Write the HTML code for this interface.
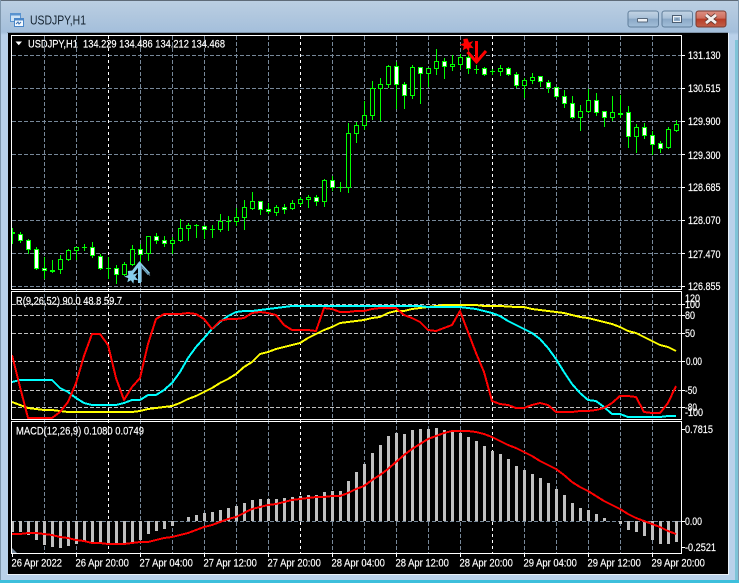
<!DOCTYPE html>
<html>
<head>
<meta charset="utf-8">
<title>USDJPY,H1</title>
<style>
html,body{margin:0;padding:0;background:#b9d1ea;width:739px;height:583px;overflow:hidden}
svg{position:absolute;left:0;top:0;display:block}
text{font-family:"Liberation Sans",sans-serif;font-size:11px;fill:#fff;stroke:#fff;stroke-width:.18px}
.t{font-size:13px;fill:#14222f;stroke:none}
</style>
</head>
<body>
<svg width="739" height="583" viewBox="0 0 739 583" xmlns="http://www.w3.org/2000/svg">
<defs>
<linearGradient id="win" x1="0" y1="0" x2="0" y2="1"><stop offset="0" stop-color="#bccfe2"/><stop offset="0.055" stop-color="#a4bfdb"/><stop offset="0.06" stop-color="#b9d1ea"/><stop offset="1" stop-color="#b9d1ea"/></linearGradient>
<linearGradient id="btn" x1="0" y1="0" x2="0" y2="1"><stop offset="0" stop-color="#c4d4e4"/><stop offset="0.45" stop-color="#a8c0d8"/><stop offset="0.5" stop-color="#8aa8c6"/><stop offset="1" stop-color="#a3c0da"/></linearGradient>
<linearGradient id="cls" x1="0" y1="0" x2="0" y2="1"><stop offset="0" stop-color="#dc9083"/><stop offset="0.45" stop-color="#cf6f5e"/><stop offset="0.5" stop-color="#b83c26"/><stop offset="1" stop-color="#c0604a"/></linearGradient>
<clipPath id="c1"><rect x="12" y="36" width="669" height="253"/></clipPath>
<clipPath id="c2"><rect x="12" y="292" width="669" height="127"/></clipPath>
<clipPath id="c3"><rect x="12" y="422" width="669" height="131"/></clipPath>
</defs>

<!-- window -->
<rect width="739" height="583" fill="url(#win)"/>
<rect x="0" y="0" width="739" height="1" fill="#5f6b78"/>
<rect x="0" y="0" width="1" height="583" fill="#7f97ad"/>
<rect x="738" y="0" width="1" height="583" fill="#7f97ad"/>
<rect x="735" y="40" width="3" height="540" fill="#7fc4d8"/>
<rect x="0" y="580" width="739" height="3" fill="#3dbfdc"/>
<rect x="8" y="33" width="720" height="541" fill="#000"/>
<rect x="7" y="32" width="721" height="1" fill="#7f93a8"/>
<rect x="728" y="33" width="1" height="541" fill="#eaf1f8"/>
<rect x="7" y="574" width="722" height="1" fill="#eaf1f8"/>

<!-- title icon -->
<g shape-rendering="crispEdges">
<rect x="10.5" y="13.5" width="10" height="8" fill="#cfe3f5" stroke="#5a93cf"/>
<rect x="10.5" y="13.5" width="10" height="2" fill="#5a93cf"/>
<rect x="14.5" y="18.5" width="9" height="8" fill="#f4f9fe" stroke="#4a86c8"/>
<rect x="14.5" y="18.5" width="9" height="2" fill="#4a86c8"/>
</g>
<path d="M16 24l2-2 1 2 2-2" fill="none" stroke="#3a70b0"/>
<text class="t" x="30" y="24.5" textLength="56" lengthAdjust="spacingAndGlyphs">USDJPY,H1</text>

<!-- caption buttons -->
<rect x="628" y="11" width="30.5" height="16" rx="2.5" fill="url(#btn)" stroke="#5f7d9a"/>
<rect x="662" y="11" width="30.5" height="16" rx="2.5" fill="url(#btn)" stroke="#5f7d9a"/>
<rect x="696" y="11" width="30" height="16" rx="2.5" fill="url(#cls)" stroke="#7a3a30"/>
<rect x="637.5" y="18.5" width="10" height="3.5" fill="#eef2f6" stroke="#56677a" rx="0.5"/>
<rect x="672.5" y="15.5" width="9" height="7" fill="none" stroke="#4c5e72" stroke-width="1"/>
<rect x="673.5" y="16.5" width="7" height="5" fill="none" stroke="#eef2f6" stroke-width="1"/>
<rect x="675.5" y="18" width="3" height="2" fill="#7d97b0"/>
<path d="M706 15l10 8M716 15l-10 8" stroke="#5a3530" stroke-width="4.4" fill="none"/>
<path d="M706 15l10 8M716 15l-10 8" stroke="#f4f0ee" stroke-width="2.8" fill="none"/>

<!-- grid -->
<g shape-rendering="crispEdges" fill="none">
<path stroke="#778899" stroke-dasharray="4 2" d="M12 55.5H681M12 88.5H681M12 121.5H681M12 154.5H681M12 187.5H681M12 220.5H681M12 253.5H681M12 286.5H681M12 521.5H681"/>
<path stroke="#c0c0c0" stroke-dasharray="4 2" d="M12 304.5H681M12 315.5H681M12 333.5H681M12 361.5H681M12 390.5H681M12 407.5H681"/>
<path stroke="#778899" stroke-dasharray="4 2" d="M44.5 36V553M76.5 36V553M140.5 36V553M172.5 36V553M204.5 36V553M236.5 36V553M268.5 36V553M332.5 36V553M364.5 36V553M396.5 36V553M428.5 36V553M460.5 36V553M524.5 36V553M556.5 36V553M588.5 36V553M620.5 36V553M652.5 36V553"/>
<path stroke="#fff" stroke-dasharray="3 3" d="M108.5 36V553M300.5 36V553M492.5 36V553"/>
</g>

<!-- candles -->
<g clip-path="url(#c1)" shape-rendering="crispEdges" stroke="#00ff00" fill="none">
<path d="M12.5 228V244M20.5 232V243M28.5 239V254M36.5 247V270M44.5 257V279M52.5 260V273M60.5 255V274M68.5 249V261M76.5 247V260M84.5 244V251M92.5 242V258M100.5 254V270M108.5 257V279M116.5 265V284M124.5 262V276M132.5 245V266M140.5 244V264M148.5 236V261M156.5 233V244M164.5 236V247M172.5 237V254M180.5 219V242M188.5 223V241M196.5 224V238M204.5 225V239M212.5 225V238M220.5 214V232M228.5 216V231M236.5 208V226M244.5 200V230M252.5 192V210M260.5 201V215M268.5 203V214M276.5 205V216M284.5 204V214M292.5 200V210M300.5 197V206M308.5 195V208M316.5 195V206M324.5 179V207M332.5 176V191M340.5 182V192M348.5 123V193M356.5 122V143M364.5 101V130M372.5 81V120M380.5 78V121M388.5 65V88M396.5 62V109M404.5 82V109M412.5 65V99M420.5 67V104M428.5 68V87M436.5 49V75M444.5 58V79M452.5 55V71M460.5 54V69M468.5 54V74M476.5 65V74M484.5 67V76M492.5 69V75M500.5 65V76M508.5 67V76M516.5 72V88M524.5 78V98M532.5 73V84M540.5 76V87M548.5 80V93M556.5 87V98M564.5 90V108M572.5 96V119M580.5 105V131M588.5 89V113M596.5 93V116M604.5 111V127M612.5 96V121M620.5 95V118M628.5 106V148M636.5 124V153M644.5 123V139M652.5 131V155M660.5 141V153M668.5 127V149M676.5 120V132"/>
<path d="M10 232.5h5M10 233.5h5M50 270.5h5M50 271.5h5M82 247.5h5M106 268.5h5M194 225.5h5M210 229.5h5M226 221.5h5M338 187.5h5M474 69.5h5M490 71.5h5M618 113.5h5M618 114.5h5"/>
<path fill="#000" d="M58.5 259.5h4V269.5h-4zM66.5 250.5h4V259.5h-4zM74.5 247.5h4V250.5h-4zM122.5 264.5h4V274.5h-4zM130.5 249.5h4V264.5h-4zM146.5 236.5h4V253.5h-4zM170.5 240.5h4V243.5h-4zM178.5 228.5h4V240.5h-4zM186.5 225.5h4V228.5h-4zM218.5 221.5h4V229.5h-4zM234.5 217.5h4V221.5h-4zM242.5 207.5h4V217.5h-4zM250.5 201.5h4V208.5h-4zM274.5 207.5h4V212.5h-4zM290.5 203.5h4V208.5h-4zM298.5 199.5h4V203.5h-4zM306.5 197.5h4V199.5h-4zM322.5 180.5h4V201.5h-4zM346.5 133.5h4V187.5h-4zM354.5 125.5h4V133.5h-4zM362.5 115.5h4V125.5h-4zM370.5 88.5h4V115.5h-4zM378.5 84.5h4V88.5h-4zM386.5 66.5h4V84.5h-4zM410.5 67.5h4V95.5h-4zM426.5 68.5h4V73.5h-4zM434.5 61.5h4V68.5h-4zM450.5 64.5h4V66.5h-4zM458.5 57.5h4V64.5h-4zM498.5 68.5h4V71.5h-4zM522.5 80.5h4V85.5h-4zM530.5 77.5h4V80.5h-4zM578.5 111.5h4V117.5h-4zM586.5 100.5h4V111.5h-4zM610.5 112.5h4V117.5h-4zM634.5 127.5h4V136.5h-4zM666.5 129.5h4V147.5h-4zM674.5 124.5h4V130.5h-4z"/>
<path fill="#fff" d="M18.5 234.5h4V240.5h-4zM26.5 240.5h4V249.5h-4zM34.5 249.5h4V268.5h-4zM42.5 268.5h4V270.5h-4zM90.5 247.5h4V255.5h-4zM98.5 256.5h4V268.5h-4zM114.5 268.5h4V274.5h-4zM138.5 249.5h4V254.5h-4zM154.5 236.5h4V240.5h-4zM162.5 240.5h4V243.5h-4zM202.5 226.5h4V229.5h-4zM258.5 201.5h4V209.5h-4zM266.5 209.5h4V211.5h-4zM282.5 207.5h4V209.5h-4zM314.5 197.5h4V201.5h-4zM330.5 180.5h4V187.5h-4zM394.5 66.5h4V84.5h-4zM402.5 84.5h4V95.5h-4zM418.5 67.5h4V73.5h-4zM442.5 61.5h4V66.5h-4zM466.5 57.5h4V68.5h-4zM482.5 68.5h4V74.5h-4zM506.5 68.5h4V74.5h-4zM514.5 74.5h4V85.5h-4zM538.5 76.5h4V81.5h-4zM546.5 82.5h4V87.5h-4zM554.5 87.5h4V96.5h-4zM562.5 96.5h4V103.5h-4zM570.5 103.5h4V117.5h-4zM594.5 100.5h4V112.5h-4zM602.5 111.5h4V117.5h-4zM626.5 112.5h4V136.5h-4zM642.5 127.5h4V135.5h-4zM650.5 135.5h4V144.5h-4zM658.5 143.5h4V148.5h-4z"/>
</g>

<!-- signal arrows -->
<g clip-path="url(#c1)">
<path d="M139.5 283V264" stroke="#87ceeb" stroke-width="3" fill="none"/>
<path d="M130.5 275L139.5 263.5L149 274" stroke="#87ceeb" stroke-width="3" fill="none"/>
<path d="M141.500 282V266.500L150 275.500" stroke="#5f7f96" stroke-width="1" fill="none"/>
<path d="M132 270.500l1.500 4 4.300-1.500-2.600 3.600 3 3.600-4.300-.5-.5 4.100-2.500-3.600-3.600 2 1-4.100-4.100-1.500 4.100-1.500-.5-4.100z" fill="#87ceeb"/>
<path d="M476.500 41V60" stroke="#ff0000" stroke-width="3" fill="none"/>
<path d="M467.500 52L476.500 62L486 51" stroke="#ff0000" stroke-width="3" fill="none"/>
<path d="M467.500 38.500l1.500 4 4.300-1.500-2.600 3.600 3 3.600-4.300-.5-.5 4.100-2.500-3.600-3.600 2 1-4.100-4.100-1.500 4.100-1.500-.5-4.100z" fill="#ff0000"/>
</g>

<!-- panel 2 lines -->
<g clip-path="url(#c2)" fill="none" stroke-width="2" shape-rendering="crispEdges" stroke-linejoin="round">
<polyline stroke="#ffff00" points="12,402 20,405 28,408 36,409 44,410 52,410 60,411 68,412 132,412 140,411 148,409 156,408 164,407 172,406 180,403 188,399 196,396 204,392 212,388 220,383 228,379 236,374 244,367 252,362 260,354 268,352 276,349 284,347 292,345 300,343 308,338 316,334 324,330 332,327 340,323 348,322 356,321 364,320 372,318 380,317 388,313 396,311 404,311 412,309 420,308 428,307 436,306 444,305 468,305 476,305 484,306 500,306 516,307 524,307 532,309 548,311 556,312 564,313 572,315 580,317 588,318 604,322 612,324 620,327 628,331 636,333 644,337 652,341 660,345 668,347 676,351"/>
<polyline stroke="#00ffff" points="12,382 20,380 52,380 60,388 68,392 76,398 84,403 92,405 116,405 124,403 132,400 140,400 148,395 156,395 164,390 172,383 180,372 188,358 196,347 204,338 212,329 220,322 228,316 236,312 244,311 252,311 260,310 268,309 276,308 284,307 292,306 420,306 428,307 452,307 460,307 468,308 476,309 484,311 492,313 500,316 508,321 516,325 524,329 532,333 540,339 548,348 556,359 564,372 572,384 580,393 588,400 596,401 604,407 612,414 620,414 628,417 660,417 668,416 676,416"/>
<polyline stroke="#ff0000" points="12,355 20,387 28,418 52,418 60,412 68,402 76,383 84,356 92,334 100,334 108,345 116,378 124,400 132,387 140,378 148,344 156,319 164,314 172,314 180,314 188,313 196,314 204,319 212,329 220,321 228,319 236,319 244,318 252,313 260,312 268,313 276,315 284,325 292,330 308,330 316,331 324,308 332,309 340,312 348,312 356,311 364,311 372,309 380,308 396,308 404,315 412,318 420,322 428,330 436,331 444,328 452,325 460,311 468,332 476,353 484,372 492,401 500,404 508,405 516,408 524,408 532,405 540,403 548,405 556,412 572,412 580,411 588,411 596,410 604,408 612,403 620,396 628,396 636,397 644,412 652,413 660,413 668,403 676,386"/>
</g>

<!-- panel 3 -->
<g clip-path="url(#c3)" fill="none">
<path shape-rendering="crispEdges" stroke="#c0c0c0" stroke-width="3" d="M12.500 521V532M20.500 521V532M28.500 521V535M36.500 521V540M44.500 521V545M52.500 521V547M60.500 521V548M68.500 521V546M76.500 521V544M84.500 521V542M92.500 521V542M100.500 521V542M108.500 521V544M116.500 521V545M124.500 521V545M132.500 521V542M140.500 521V540M148.500 521V534M156.500 521V531M164.500 521V529M172.500 521V526M188.500 521V517M196.500 521V515M204.500 521V513M212.500 521V512M220.500 521V510M228.500 521V508M236.500 521V506M244.500 521V503M252.500 521V500M260.500 521V499M268.500 521V499M276.500 521V499M284.500 521V498M292.500 521V497M300.500 521V496M308.500 521V495M316.500 521V495M324.500 521V492M332.500 521V491M340.500 521V491M348.500 521V481M356.500 521V472M364.500 521V464M372.500 521V453M380.500 521V445M388.500 521V436M396.500 521V433M404.500 521V434M412.500 521V430M420.500 521V429M428.500 521V429M436.500 521V428M444.500 521V430M452.500 521V431M460.500 521V433M468.500 521V437M476.500 521V441M484.500 521V446M492.500 521V451M500.500 521V454M508.500 521V459M516.500 521V466M524.500 521V470M532.500 521V474M540.500 521V478M548.500 521V483M556.500 521V489M564.500 521V495M572.500 521V503M580.500 521V508M588.500 521V510M596.500 521V514M604.500 521V518M620.500 521V524M628.500 521V530M636.500 521V532M644.500 521V536M652.500 521V540M660.500 521V544M668.500 521V544M676.500 521V542"/>
<polyline stroke="#ff0000" stroke-width="2" shape-rendering="crispEdges" points="12,534 20,534 28,533 36,533 44,534 52,535 60,537 68,538 76,540 84,541 92,543 100,543 108,544 116,544 124,544 132,543 140,542 148,542 156,540 164,538 172,537 180,535 188,533 196,530 204,527 212,525 220,522 228,519 236,517 244,513 252,509 260,507 268,505 276,504 284,502 292,500 300,499 308,498 316,497 324,497 332,496 340,496 348,493 356,489 364,486 372,480 380,475 388,469 396,462 404,455 412,449 420,444 428,439 436,436 444,433 452,431 460,431 468,431 476,432 484,434 492,437 500,441 508,445 516,448 524,452 532,456 540,461 548,465 556,469 564,475 572,482 580,487 588,491 596,496 604,501 612,505 620,509 628,514 636,518 644,521 652,524 660,527 668,531 676,534"/>
<path d="M12 548L17 553H12z" fill="#778899"/>
</g>

<!-- frames and ticks -->
<g shape-rendering="crispEdges" fill="none" stroke="#fff">
<rect x="11.500" y="35.500" width="670" height="254"/>
<rect x="11.500" y="291.500" width="670" height="128"/>
<rect x="11.500" y="421.500" width="670" height="132"/>
<path d="M682 55.500h3M682 88.500h3M682 121.500h3M682 154.500h3M682 187.500h3M682 220.500h3M682 253.500h3M682 286.500h3M682 304.500h3M682 315.500h3M682 333.500h3M682 361.500h3M682 390.500h3M682 407.500h3M682 429.500h3M682 521.500h3M682 547.500h3"/>
<path d="M12.500 554v3M76.500 554v3M140.500 554v3M204.500 554v3M268.500 554v3M332.500 554v3M396.500 554v3M460.500 554v3M524.500 554v3M588.500 554v3M652.500 554v3"/>
</g>

<!-- labels -->
<path d="M15.500 41.500h6.500l-3.250 3.700z" fill="#fff"/>
<text x="28" y="47.500" textLength="197" lengthAdjust="spacingAndGlyphs" xml:space="preserve">USDJPY,H1  134.229 134.486 134.212 134.468</text>
<text x="16" y="304.500" textLength="106" lengthAdjust="spacingAndGlyphs">R(9,26,52) 90.0 48.8 59.7</text>
<text x="16" y="434.500" textLength="128" lengthAdjust="spacingAndGlyphs">MACD(12,26,9) 0.1080 0.0749</text>

<text x="688" y="59" textLength="32.500" lengthAdjust="spacingAndGlyphs">131.130</text>
<text x="688" y="92" textLength="32.500" lengthAdjust="spacingAndGlyphs">130.515</text>
<text x="688" y="125" textLength="32.500" lengthAdjust="spacingAndGlyphs">129.900</text>
<text x="688" y="159" textLength="32.500" lengthAdjust="spacingAndGlyphs">129.300</text>
<text x="688" y="191" textLength="32.500" lengthAdjust="spacingAndGlyphs">128.685</text>
<text x="688" y="224" textLength="32.500" lengthAdjust="spacingAndGlyphs">128.070</text>
<text x="688" y="258" textLength="32.500" lengthAdjust="spacingAndGlyphs">127.470</text>
<text x="688" y="290" textLength="32.500" lengthAdjust="spacingAndGlyphs">126.855</text>
<text x="685" y="302" textLength="15" lengthAdjust="spacingAndGlyphs">120</text>
<text x="685" y="308" textLength="15" lengthAdjust="spacingAndGlyphs">100</text>
<text x="685" y="319" textLength="10" lengthAdjust="spacingAndGlyphs">80</text>
<text x="685" y="337" textLength="10" lengthAdjust="spacingAndGlyphs">50</text>
<text x="686" y="365" textLength="16" lengthAdjust="spacingAndGlyphs">0.00</text>
<text x="685" y="394" textLength="12" lengthAdjust="spacingAndGlyphs">-50</text>
<text x="685" y="411" textLength="12" lengthAdjust="spacingAndGlyphs">-80</text>
<text x="685" y="416" textLength="18" lengthAdjust="spacingAndGlyphs">-100</text>
<text x="685" y="433" textLength="28" lengthAdjust="spacingAndGlyphs">0.7815</text>
<text x="685" y="525" textLength="17" lengthAdjust="spacingAndGlyphs">0.00</text>
<text x="685" y="551" textLength="31" lengthAdjust="spacingAndGlyphs">-0.2521</text>

<text x="11.500" y="566.500" textLength="50.500" lengthAdjust="spacingAndGlyphs">26 Apr 2022</text>
<text x="75.500" y="566.500" textLength="53.400" lengthAdjust="spacingAndGlyphs">26 Apr 20:00</text>
<text x="139.500" y="566.500" textLength="53.400" lengthAdjust="spacingAndGlyphs">27 Apr 04:00</text>
<text x="203.500" y="566.500" textLength="53.400" lengthAdjust="spacingAndGlyphs">27 Apr 12:00</text>
<text x="267.500" y="566.500" textLength="53.400" lengthAdjust="spacingAndGlyphs">27 Apr 20:00</text>
<text x="331.500" y="566.500" textLength="53.400" lengthAdjust="spacingAndGlyphs">28 Apr 04:00</text>
<text x="395.500" y="566.500" textLength="53.400" lengthAdjust="spacingAndGlyphs">28 Apr 12:00</text>
<text x="459.500" y="566.500" textLength="53.400" lengthAdjust="spacingAndGlyphs">28 Apr 20:00</text>
<text x="523.500" y="566.500" textLength="53.400" lengthAdjust="spacingAndGlyphs">29 Apr 04:00</text>
<text x="587.500" y="566.500" textLength="53.400" lengthAdjust="spacingAndGlyphs">29 Apr 12:00</text>
<text x="651.500" y="566.500" textLength="53.400" lengthAdjust="spacingAndGlyphs">29 Apr 20:00</text>
</svg>
</body>
</html>
